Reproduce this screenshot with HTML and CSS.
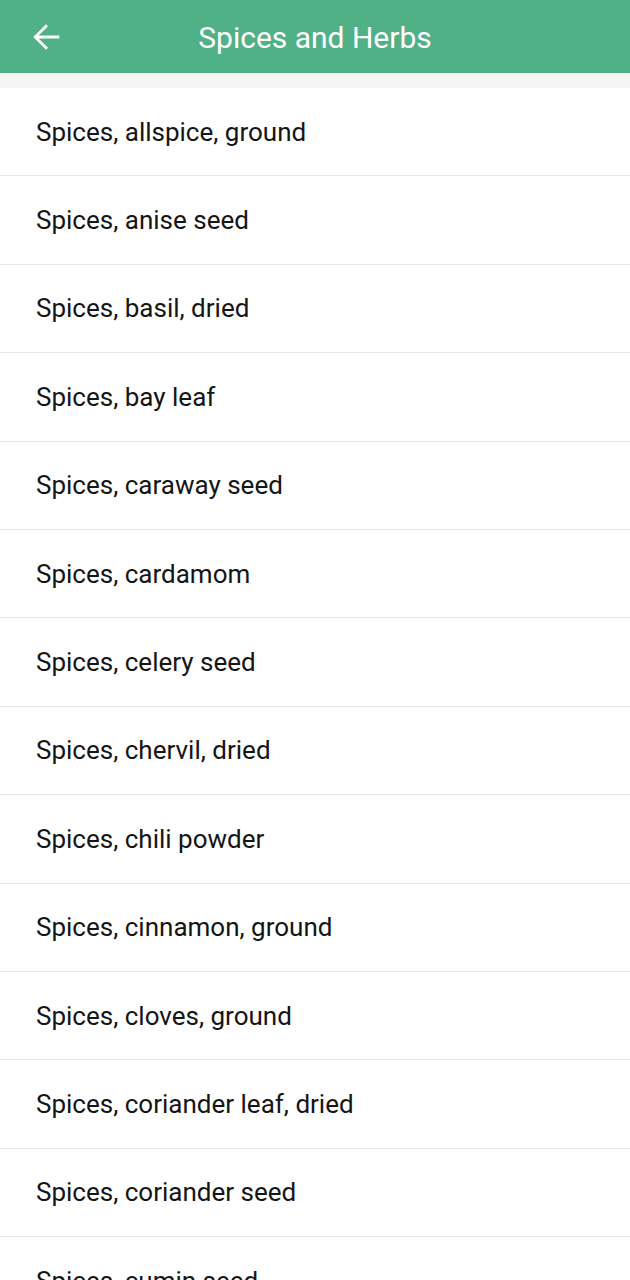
FILE: index.html
```html
<!DOCTYPE html>
<html>
<head>
<meta charset="utf-8">
<link rel="stylesheet" href="styles.css">
</head>
<body>
<header class="appbar">
  <button class="back" aria-label="Back">
    <svg width="40" height="40" viewBox="0 0 24 24"><path d="M20 11.15H7.6l5.6-5.6L12 4.35l-7.65 7.65L12 19.65l1.2-1.2-5.6-5.6H20v-1.7z" fill="#fff"/></svg>
  </button>
  <h1 class="title">Spices and Herbs</h1>
</header>
<div class="spacer"></div>
<ul class="list">
  <li class="item">Spices, allspice, ground</li>
  <li class="item">Spices, anise seed</li>
  <li class="item">Spices, basil, dried</li>
  <li class="item">Spices, bay leaf</li>
  <li class="item">Spices, caraway seed</li>
  <li class="item">Spices, cardamom</li>
  <li class="item">Spices, celery seed</li>
  <li class="item">Spices, chervil, dried</li>
  <li class="item">Spices, chili powder</li>
  <li class="item">Spices, cinnamon, ground</li>
  <li class="item">Spices, cloves, ground</li>
  <li class="item">Spices, coriander leaf, dried</li>
  <li class="item">Spices, coriander seed</li>
  <li class="item">Spices, cumin seed</li>
</ul>
</body>
</html>
```
FILE: styles.css
```css
* { box-sizing: border-box; }
html, body { margin: 0; padding: 0; background: #fff; }
body { font-family: Roboto, "Noto Sans", sans-serif; overflow: hidden; height: 1280px; }
.appbar {
  height: 73px;
  background: #51b186;
  display: flex;
  align-items: center;
  position: relative;
}
.back {
  background: none;
  border: 0;
  padding: 0;
  margin-left: 26px;
  width: 40px;
  height: 40px;
  display: flex;
  align-items: center;
  justify-content: center;
}
.back svg { width: 40px; height: 40px; flex: none; }
.title {
  position: absolute;
  left: 0; right: 0;
  top: 18px;
  margin: 0;
  text-align: center;
  color: #fff;
  font-weight: 400;
  font-size: 30px;
  line-height: 40px;
  pointer-events: none;
}
.spacer { height: 15px; background: #f5f5f5; }
.list { list-style: none; margin: 0; padding: 0; }
.item {
  height: 88.4px;
  border-bottom: 1px solid #e6e6e6;
  display: flex;
  align-items: center;
  padding-left: 36px;
  font-size: 26px;
  color: #151515;
}
```
